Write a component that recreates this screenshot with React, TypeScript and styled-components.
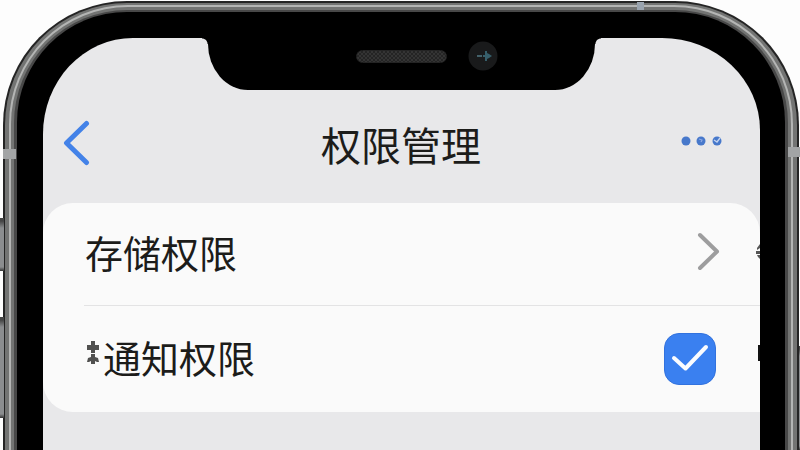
import React, { useState } from "react";
import styled, { createGlobalStyle } from "styled-components";

const GlobalStyle = createGlobalStyle`
  *, *::before, *::after { box-sizing: border-box; }
  body {
    margin: 0;
    overflow: hidden;
    background: #fdfdfd;
    color: #1c1c1a;
    font-family: "Noto Sans CJK SC", "Noto Sans", sans-serif;
  }
  button { font: inherit; color: inherit; background: none; border: 0; padding: 0; cursor: pointer; }
`;

const Page = styled.main`
  position: relative;
  display: flex;
  min-height: 100vh;
  padding: 1px 1px 0 3px;
`;

/* One layer of the metal edge or of the black bezel. */
const Ring = styled.div<{ $color: string; $top: number; $side: number; $end?: number; $radius: number }>`
  flex: 1;
  display: flex;
  min-width: 0;
  padding: ${(p) => `${p.$top}px ${p.$end ?? p.$side}px 0 ${p.$side}px`};
  background: ${(p) => p.$color};
  border-radius: ${(p) => `${p.$radius}px ${p.$radius}px 0 0`};
`;

const Screen = styled.div`
  flex: 1;
  display: flex;
  flex-direction: column;
  min-width: 0;
  background: #e8e8ea;
  border-radius: 90px 98px 0 0 / 96px 92px 0 0;
`;

const Notch = styled.div`
  position: relative;
  align-self: center;
  display: flex;
  justify-content: center;
  align-items: center;
  gap: 21px;
  width: 54%;
  height: 52px;
  padding: 0 0 16px 52px;
  background: #000;
  border-radius: 0 0 40px 40px / 0 0 46px 46px;

  &::before,
  &::after {
    content: "";
    position: absolute;
    top: 0;
    width: 6px;
    height: 6px;
  }
  &::before {
    right: 100%;
    background: radial-gradient(circle at 0 100%, transparent 5px, #000 6px);
  }
  &::after {
    left: 100%;
    background: radial-gradient(circle at 100% 100%, transparent 5px, #000 6px);
  }
`;

const Speaker = styled.div`
  width: 91px;
  height: 13px;
  border-radius: 7px;
  border: 1px solid #242424;
  background: repeating-conic-gradient(#343434 0 25%, #242424 0 50%) 0 0 / 4px 4px;
`;

const NavBar = styled.header`
  display: grid;
  grid-template-columns: 1fr auto 1fr;
  align-items: center;
  height: 113px;
  padding: 0 38px 0 19px;
`;

const Title = styled.h1`
  margin: 0;
  padding: 0 0 6px 18px;
  font-size: 40px;
  line-height: 56px;
  font-weight: 400;
`;

const NavButton = styled.button<{ $end?: boolean }>`
  justify-self: ${(p) => (p.$end ? "end" : "start")};
  display: flex;
  padding-bottom: 8px;
`;

const Card = styled.section`
  background: #fafafa;
  border-radius: 30px 30px 0 30px;
`;

const rowLayout = `
  position: relative;
  display: flex;
  align-items: center;
  justify-content: space-between;
  width: 100%;
  padding: 0 44px 0 42px;
  font-size: 38px;
  line-height: 56px;
  text-align: left;
  cursor: pointer;
`;

const LinkRow = styled.button`
  &&& {
    ${rowLayout}
    height: 102px;
    padding-right: 40px;
  }
`;

const CheckRow = styled.label`
  ${rowLayout}
  height: 106px;
`;

const Divider = styled.hr`
  height: 1px;
  margin: 0 0 0 41px;
  border: 0;
  background: #e3e3e4;
`;

const RowText = styled.span`
  display: flex;
  align-items: center;
  padding-bottom: 4px;
`;

const CheckBox = styled.span`
  display: grid;
  width: 52px;
  height: 52px;

  input,
  svg {
    grid-area: 1 / 1;
  }
  input {
    appearance: none;
    width: 52px;
    height: 52px;
    margin: 0;
    border-radius: 15px;
    border: 2px solid #b8b8bc;
    cursor: pointer;
  }
  input:checked {
    border: 1px solid #3272de;
    background: #3a80f0;
  }
  svg {
    pointer-events: none;
    z-index: 1;
  }
  input:not(:checked) + svg {
    visibility: hidden;
  }
`;

const EdgeMark = styled.svg`
  position: absolute;
  right: 0;
  top: 50%;
  transform: translateY(-50%);
`;

const Antenna = styled.i<{ $at: "left" | "right" | "top" }>`
  position: absolute;
  background: #a2a4a5;
  ${(p) =>
    p.$at === "top"
      ? "top: 2px; right: 156px; width: 7px; height: 8px; background: #9aa4af;"
      : p.$at === "left"
        ? "left: 3px; top: 149px; width: 13px; height: 10px;"
        : "right: 0; top: 147px; width: 12px; height: 10px;"}
`;

const SideKey = styled.i<{ $top: number; $height: number; $right?: boolean }>`
  position: absolute;
  ${(p) => (p.$right ? "right: 0; width: 1px;" : "left: 0; width: 4px;")}
  top: ${(p) => p.$top}px;
  height: ${(p) => p.$height}px;
  background: linear-gradient(#444 0 3px, #8b8d8f 10px calc(100% - 4px), #333);
`;

export default function App() {
  const [notify, setNotify] = useState(true);
  return (
    <>
      <GlobalStyle />
      <Page>
        <Ring $color="#242424" $top={2} $side={2} $radius={124}>
          <Ring $color="#737473" $top={2} $side={4} $radius={122}>
            <Ring $color="#b4b5b4" $top={2} $side={2} $radius={119}>
              <Ring $color="#737473" $top={3} $side={3} $radius={117}>
                <Ring $color="#484848" $top={2} $side={3} $radius={113}>
                  <Ring $color="#000" $top={26} $side={26} $end={25} $radius={110}>
                    <Screen>
                      <Notch>
                        <Speaker />
                        <svg width="30" height="30" viewBox="0 0 30 30" aria-hidden="true">
                          <circle cx="15" cy="15" r="14.5" fill="#191a1b" />
                          <path d="M9 14h5v2H9z" fill="#43616a" />
                          <path d="M17 10h2v2l2 1 3 2-3 2-2 1v2h-2v-4h-2v-2h2z" fill="#365e6a" />
                        </svg>
                      </Notch>
                      <NavBar>
                        <NavButton type="button" aria-label="返回">
                          <svg width="30" height="46" viewBox="0 0 30 46" fill="none" stroke="#4382e8" strokeWidth="5" strokeLinecap="round" strokeLinejoin="round">
                            <path d="M24.500 3.500L4.500 23L24.500 42.500" />
                          </svg>
                        </NavButton>
                        <Title>权限管理</Title>
                        <NavButton type="button" $end aria-label="更多">
                          <svg width="42" height="14" viewBox="0 0 42 14">
                            <g fill="#4778cb">
                              <circle cx="6" cy="5" r="4.500" />
                              <circle cx="21" cy="5" r="4.500" />
                              <circle cx="37" cy="5" r="4.500" />
                            </g>
                            <path d="M19 3l3 1-1 2" fill="none" stroke="#8eaae5" strokeWidth="1.200" />
                            <path d="M34 4l3 2 3-4" fill="none" stroke="#c3d3ef" strokeWidth="1.400" />
                          </svg>
                        </NavButton>
                      </NavBar>
                      <Card>
                        <LinkRow type="button">
                          <RowText>存储权限</RowText>
                          <svg width="24" height="46" viewBox="0 0 24 46" fill="none" stroke="#9d9d9e" strokeWidth="4" strokeLinecap="round" strokeLinejoin="round" aria-hidden="true">
                            <path d="M4 4L21 20.500L4 37" />
                          </svg>
                          <EdgeMark width="4" height="22" viewBox="0 0 4 22" aria-hidden="true">
                            <path d="M4 1L1 5v2l3-2zM0 8h4v3H0zM1 12h3v4L2 14z" fill="#555" />
                          </EdgeMark>
                        </LinkRow>
                        <Divider />
                        <CheckRow>
                          <RowText>
                            <svg width="18" height="38" viewBox="0 0 18 38" aria-hidden="true">
                              <g fill="#50504f">
                                <path d="M6 3h4v4h4v5h-4v3H6v-3H2V7h4z" />
                                <path d="M6 16h4v3l3 1 1 4h-2l-2-1v3H6v-3l-2 1H2l1-4 3-1z" />
                              </g>
                            </svg>
                            通知权限
                          </RowText>
                          <CheckBox>
                            <input type="checkbox" checked={notify} onChange={(e) => setNotify(e.target.checked)} />
                            <svg width="52" height="52" viewBox="0 0 52 52" fill="none" stroke="#fafcff" strokeWidth="4" strokeLinecap="round" strokeLinejoin="round" aria-hidden="true">
                              <path d="M10 25L21.500 35.500L42 14" />
                            </svg>
                          </CheckBox>
                          <EdgeMark width="2" height="32" viewBox="0 0 2 32" aria-hidden="true">
                            <path d="M0 2h2v16H0z" fill="#111" />
                          </EdgeMark>
                        </CheckRow>
                      </Card>
                    </Screen>
                  </Ring>
                </Ring>
              </Ring>
            </Ring>
          </Ring>
        </Ring>
        <Antenna $at="top" />
        <Antenna $at="left" />
        <Antenna $at="right" />
        <SideKey $top={218} $height={53} />
        <SideKey $top={317} $height={101} />
        <SideKey $top={346} $height={104} $right />
      </Page>
    </>
  );
}
